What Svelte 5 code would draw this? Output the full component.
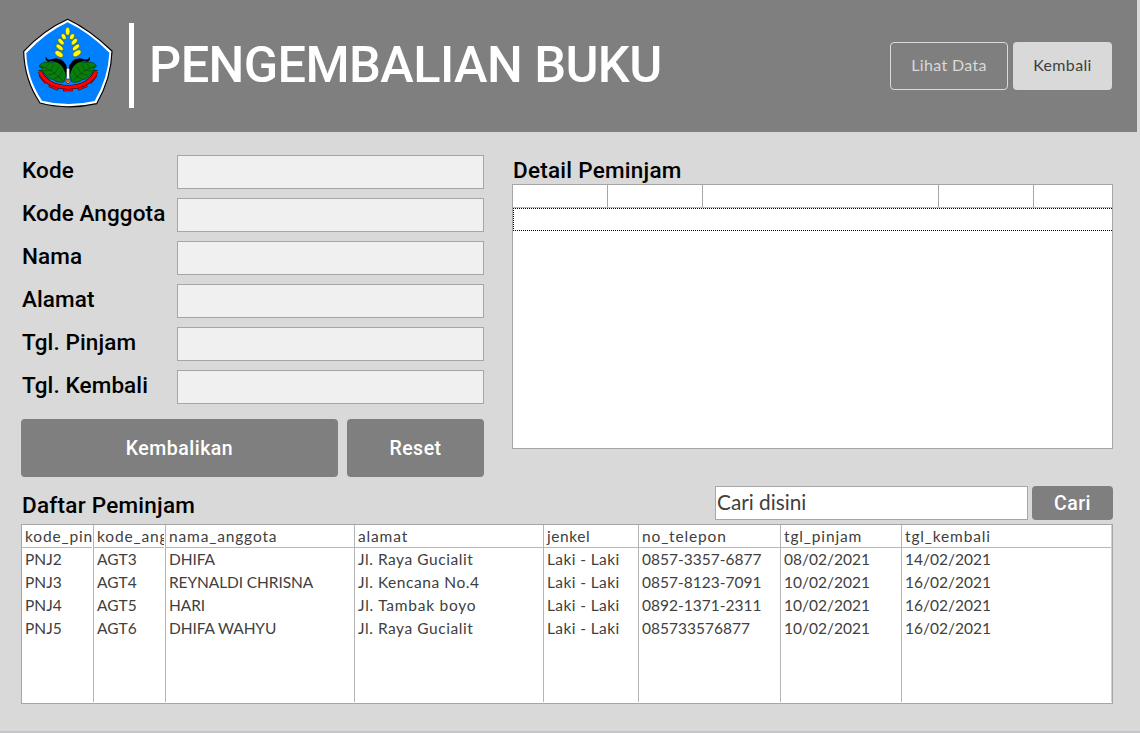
<script>
  const fields = ['Kode', 'Kode Anggota', 'Nama', 'Alamat', 'Tgl. Pinjam', 'Tgl. Kembali'];
  const columns = ['kode_pinjam', 'kode_anggota', 'nama_anggota', 'alamat', 'jenkel', 'no_telepon', 'tgl_pinjam', 'tgl_kembali'];
  const rows = [
    ['PNJ2', 'AGT3', 'DHIFA', 'Jl. Raya Gucialit', 'Laki - Laki', '0857-3357-6877', '08/02/2021', '14/02/2021'],
    ['PNJ3', 'AGT4', 'REYNALDI CHRISNA', 'Jl. Kencana No.4', 'Laki - Laki', '0857-8123-7091', '10/02/2021', '16/02/2021'],
    ['PNJ4', 'AGT5', 'HARI', 'Jl. Tambak boyo', 'Laki - Laki', '0892-1371-2311', '10/02/2021', '16/02/2021'],
    ['PNJ5', 'AGT6', 'DHIFA WAHYU', 'Jl. Raya Gucialit', 'Laki - Laki', '085733576877', '10/02/2021', '16/02/2021']
  ];
  const grains = [
    [173, 64, 7, 12, 0], [161, 80, 6.5, 10, -30], [186, 80, 6.5, 10, 30],
    [153, 95, 6.5, 12, -42], [193, 95, 6.5, 12, 42],
    [149, 112, 6.5, 13, -52], [198, 112, 6.5, 13, 52],
    [147, 132, 8, 14, -58], [201, 130, 8, 14, 58]
  ];
  const teeth = [[174, 236, 0], [132, 229, 22], [216, 229, -22], [101, 205, 52], [247, 205, -52]];
</script>

{#snippet leaf()}
  <path d="M85 182Q98 181 97 172Q88 174 88 168C93 156 112 154 126 158C142 150 160 158 166 176Q171 194 162 215C151 219 139 216 130 209C115 207 110 200 106 192Q98 189 96 182Z" fill="#087f0c" stroke="#062c08" stroke-width="2" />
  <path d="M90 169Q124 176 159 212M107 173L117 160M122 181L132 163M135 190L146 170M147 200L157 182M99 183L122 181M113 196L135 190M130 207L147 200" fill="none" stroke="#033b06" stroke-width="1.6" />
  <path d="M108 140Q111 148 118 149L138 145Q168 148 171 177L171 210Q165 172 145 159Q130 151 114 155Q104 150 108 140Z" fill="#000" />
{/snippet}

<div class="page">
  <header>
    <svg class="logo" viewBox="36 24 276 270" aria-hidden="true">
      <path d="M173 28Q237 58 306 123Q304 204 260 281Q173 301 90 279Q43 210 41 124Q103 59 173 28Z" fill="#fff" stroke="#000" stroke-width="3.5" />
      <path d="M173 37Q235 66 298 128Q295 202 254 273Q174 292 96 272Q51 205 49 129Q108 67 173 37Z" fill="#007fff" />
      {#each grains as [x, y, rx, ry, a]}
        <ellipse cx={x} cy={y} {rx} {ry} transform={`rotate(${a} ${x} ${y})`} fill="#ff0" stroke="#333" stroke-width="1.4" />
      {/each}
      {#each teeth as [x, y, a]}
        <rect x={x - 14} y={y - 8} width="28" height="15" transform={`rotate(${a} ${x} ${y})`} fill="#f00" stroke="#300" stroke-width="1.5" />
      {/each}
      <path d="M90 185Q109 230 174 232Q239 230 258 185" fill="none" stroke="#200" stroke-width="13" />
      <path d="M90 185Q109 230 174 232Q239 230 258 185" fill="none" stroke="#f00" stroke-width="10.5" />
      {@render leaf()}
      <g transform="translate(347 0) scale(-1 1)">{@render leaf()}</g>
      <path d="M170 176H178V206H170Z" fill="#fff" />
      <path d="M168 208H180V216L174 222L168 216Z" fill="#f98732" stroke="#333" stroke-width="2" />
      <circle cx="174" cy="213" r="2" fill="#333" />
    </svg>
    <span class="bar"></span>
    <h1>PENGEMBALIAN BUKU</h1>
    <nav>
      <button class="outline">Lihat Data</button>
      <button class="light">Kembali</button>
    </nav>
  </header>

  <main>
    <section class="top">
      <div class="form">
        {#each fields as field}
          <label class="field"><span>{field}</span><input disabled /></label>
        {/each}
        <div class="actions">
          <button class="dark">Kembalikan</button>
          <button class="dark">Reset</button>
        </div>
      </div>
      <div class="detail">
        <h2>Detail Peminjam</h2>
        <div class="detail-list">
          <div class="detail-head"><i></i><i></i><i></i><i></i><i></i></div>
          <div class="focus-row"></div>
        </div>
      </div>
    </section>

    <section class="bottom">
      <div class="search">
        <h2>Daftar Peminjam</h2>
        <div class="search-box">Cari disini</div>
        <button class="dark cari">Cari</button>
      </div>
      <div class="list">
        {#each columns as name, c}
          <div class="col {name}">
            <div class="th">{name}</div>
            {#each rows as row}<div class="td">{row[c]}</div>{/each}
          </div>
        {/each}
      </div>
    </section>
  </main>
</div>

<style>
  :global(body) { margin: 0; }
  * { box-sizing: border-box; }
  .page { width: 1140px; height: 733px; background: #d9d9d9; border-bottom: 2px solid #c5c5c9; overflow: hidden; font-family: Lato, sans-serif; color: #404040; }
  header { width: 1137px; height: 132px; background: #7f7f7f; display: flex; align-items: flex-start; padding: 18px 25px 0 22px; }
  .logo { width: 92px; height: 90px; flex: none; }
  .bar { width: 5px; height: 85px; background: #fff; margin: 5px 0 0 15px; flex: none; }
  h1 { margin: 17px 0 0 15px; font: 500 50.5px/60px Roboto, sans-serif; letter-spacing: -0.6px; color: #fff; white-space: nowrap; }
  nav { display: flex; gap: 5px; margin: 24px 0 0 auto; }
  button { font-family: inherit; padding: 0; border: 0; border-radius: 4px; white-space: nowrap; }
  nav button { height: 48px; font-size: 16px; letter-spacing: 0.35px; padding-bottom: 3px; }
  .outline { width: 118px; background: transparent; border: 1px solid #d9d9d9; color: #d9d9d9; }
  .light { width: 99px; background: #d9d9d9; color: #404040; }
  main { padding: 23px 27px 0 21px; }
  .top { display: flex; height: 322px; }
  .form { width: 463px; }
  .field { display: flex; height: 34px; margin-bottom: 9px; align-items: center; }
  .field span, h2 { font: 500 22.5px/30px Roboto, sans-serif; color: #000; white-space: nowrap; letter-spacing: 0.1px; }
  .field span { width: 156px; padding: 0 0 5px 1px; }
  input { width: 307px; height: 34px; border: 1px solid #a6a6a6; background: #f0f0f0; padding: 0; }
  .actions { display: grid; grid-template-columns: 317px 137px; gap: 9px; padding-top: 6px; }
  .dark { background: #7f7f7f; color: #fff; font: 500 19.5px Roboto, sans-serif; letter-spacing: 0.5px; height: 58px; }
  .detail { width: 601px; margin-left: 28px; }
  h2 { margin: 0; padding-left: 1px; }
  .detail h2, .search h2 { letter-spacing: 0.25px; }
  .detail h2 { height: 29px; }
  .detail-list { height: 265px; border: 1px solid #a6a6a6; background: #fff; }
  .detail-head { display: grid; grid-template-columns: 95px 95px 236px 95px 78px; height: 23px; border-bottom: 1px solid #b8b8b8; }
  i { border-right: 1px solid #a6a6a6; }
  i:last-child { border: 0; }
  .focus-row { height: 23px; border: 1px dotted #000; border-right: 0; }
  .search { display: flex; height: 38px; margin-top: 9px; }
  .search h2 { width: 694px; line-height: 39px; }
  .search-box { width: 313px; height: 34px; border: 1px solid #a6a6a6; background: #fff; font-size: 20.8px; line-height: 29px; padding-left: 1px; }
  .cari { width: 81px; height: 34px; margin-left: 4px; }
  .list { width: 1092px; height: 180px; border: 1px solid #a6a6a6; background: #fff; display: grid; grid-template-columns: 72px 72px 189px 189px 95px 142px 121px 210px; font-size: 15.5px; padding-bottom: 1px; }
  .col { border-right: 1px solid #b4b4b6; overflow: hidden; }
  .col:last-child { border-color: #d0d0d0; }
  .th, .td { height: 23px; line-height: 23px; padding-left: 3px; white-space: nowrap; }
  .th { border-bottom: 1px solid #b8b8b8; overflow: clip; letter-spacing: 0.85px; }
  .kode_pinjam .th, .kode_anggota .th { clip-path: inset(0 1px 0 0); box-shadow: none; }
  .alamat .td { letter-spacing: 0.55px; }
  .alamat .td:nth-child(4) { letter-spacing: 0.75px; }
  .jenkel .th { letter-spacing: 0.55px; }
  .jenkel .td { letter-spacing: 0.4px; }
  .nama_anggota .td { letter-spacing: -0.1px; }
</style>
